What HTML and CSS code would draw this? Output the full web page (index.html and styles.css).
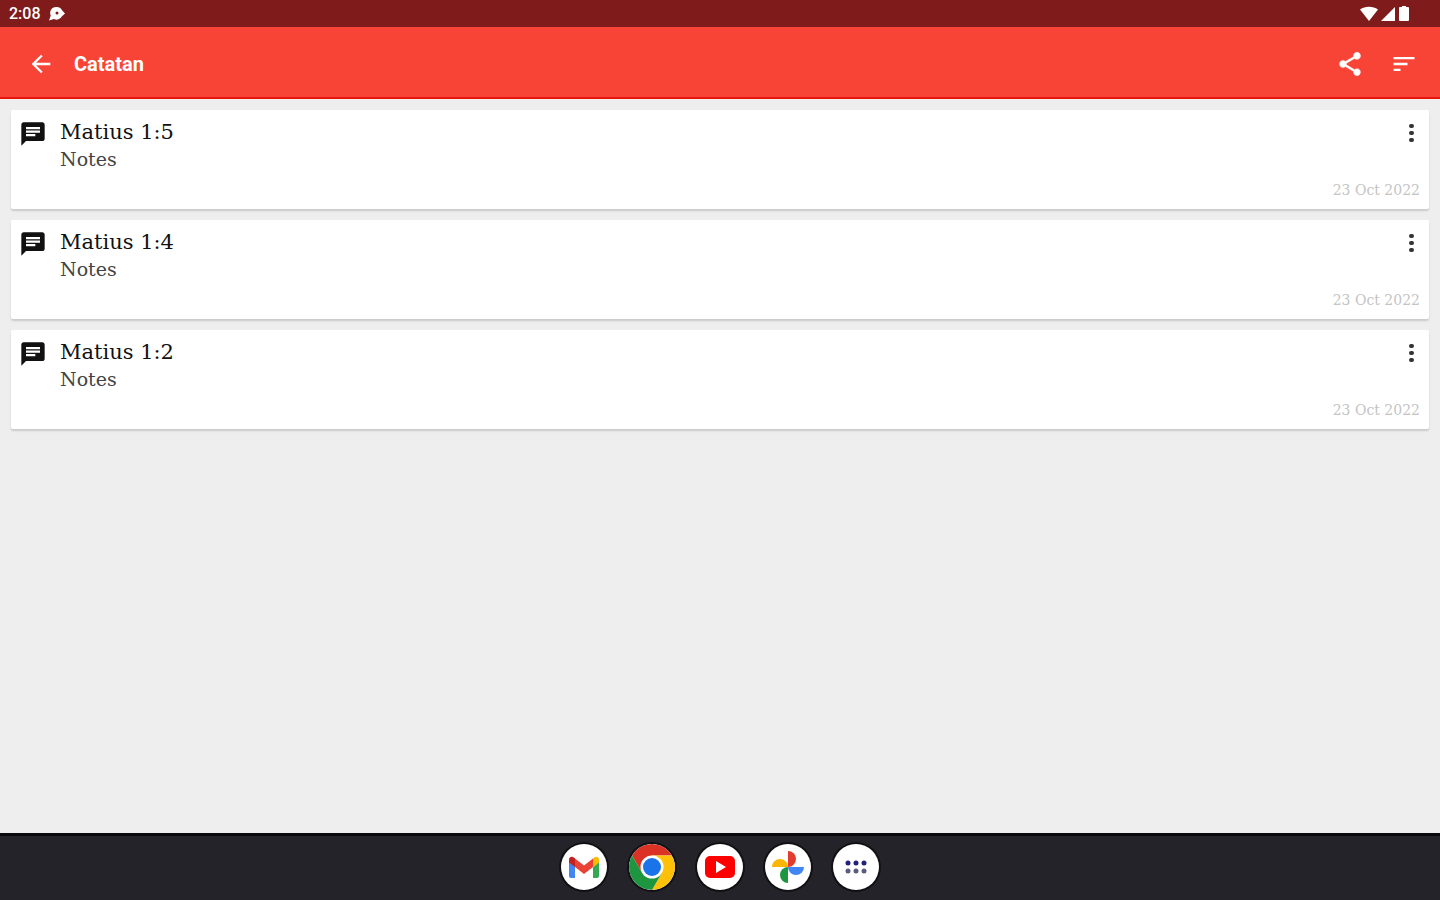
FILE: index.html
```html
<!DOCTYPE html>
<html lang="id">
<head>
  <meta charset="UTF-8">
  <meta name="viewport" content="width=device-width, initial-scale=1.0">
  <title>Catatan</title>
  <link rel="stylesheet" href="styles.css">
</head>
<body>
  <div class="status-bar">
    <span class="time">2:08</span>
    <svg class="notif" width="16" height="16" viewBox="0 0 16 16">
      <path fill="#fff" d="M7.500 1a6 6 0 0 1 5.500 3.200L16 7.500l-3 2.800A6 6 0 0 1 5 13L0 14.500 1.700 9.500A6 6 0 0 1 7.500 1z"/>
      <circle cx="8" cy="7" r="1.500" fill="#7f1b1b"/>
    </svg>
    <div class="status-icons">
      <svg width="18" height="16" viewBox="0 0 18 16"><path fill="#fff" d="M0 3.500C5-.2 13-.2 18 3.500L9 15z"/></svg>
      <svg width="16" height="16" viewBox="0 0 16 16"><path fill="#fff" d="M15 1v14H1z"/></svg>
      <svg width="12" height="16" viewBox="0 0 12 16"><path fill="#fff" d="M4 0h4v1h2q1 0 1 1v12q0 1-1 1H2q-1 0-1-1V2q0-1 1-1h2z"/></svg>
    </div>
  </div>

  <header class="toolbar">
    <button class="icon-btn" aria-label="Kembali">
      <svg width="28" height="28" viewBox="0 0 24 24"><path fill="#fff" d="M20 11H7.830l5.590-5.590L12 4l-8 8 8 8 1.410-1.410L7.830 13H20z"/></svg>
    </button>
    <h1>Catatan</h1>
    <div class="actions">
      <button class="icon-btn" aria-label="Bagikan">
        <svg width="28" height="28" viewBox="0 0 24 24"><path fill="#fff" stroke="#fff" stroke-width=".4" d="M18 16.080c-.76 0-1.440.3-1.960.77L8.910 12.700c.05-.23.09-.46.09-.7s-.04-.47-.09-.7l7.050-4.110c.54.5 1.250.81 2.040.81 1.660 0 3-1.340 3-3s-1.340-3-3-3-3 1.340-3 3c0 .24.04.47.09.7L8.040 9.810C7.500 9.310 6.790 9 6 9c-1.660 0-3 1.340-3 3s1.340 3 3 3c.79 0 1.500-.31 2.040-.81l7.120 4.160c-.05.21-.08.43-.08.65 0 1.610 1.310 2.920 2.920 2.920s2.920-1.310 2.920-2.920-1.310-2.920-2.920-2.920z"/></svg>
      </button>
      <button class="icon-btn" aria-label="Urutkan">
        <svg width="28" height="28" viewBox="0 0 24 24"><path fill="#fff" d="M3 18h6v-2H3v2zM3 6v2h18V6H3zm0 7h12v-2H3v2z"/></svg>
      </button>
    </div>
  </header>

  <!-- Daftar catatan -->
  <main class="notes">
    <article class="card">
      <svg class="note-icon" viewBox="0 0 24 24"><path d="M20 2H4c-1.100 0-2 .9-2 2v18l4-4h14c1.100 0 2-.9 2-2V4c0-1.100-.9-2-2-2zM6 9h12v2H6V9zm8 5H6v-2h8v2zm4-6H6V6h12v2z"/></svg>
      <div class="note-text">
        <h2>Matius 1:5</h2>
        <p>Notes</p>
        <time datetime="2022-10-23">23 Oct 2022</time>
      </div>
      <button class="more" aria-label="Menu"><span></span><span></span><span></span></button>
    </article>
    <article class="card">
      <svg class="note-icon" viewBox="0 0 24 24"><path d="M20 2H4c-1.100 0-2 .9-2 2v18l4-4h14c1.100 0 2-.9 2-2V4c0-1.100-.9-2-2-2zM6 9h12v2H6V9zm8 5H6v-2h8v2zm4-6H6V6h12v2z"/></svg>
      <div class="note-text">
        <h2>Matius 1:4</h2>
        <p>Notes</p>
        <time datetime="2022-10-23">23 Oct 2022</time>
      </div>
      <button class="more" aria-label="Menu"><span></span><span></span><span></span></button>
    </article>
    <article class="card">
      <svg class="note-icon" viewBox="0 0 24 24"><path d="M20 2H4c-1.100 0-2 .9-2 2v18l4-4h14c1.100 0 2-.9 2-2V4c0-1.100-.9-2-2-2zM6 9h12v2H6V9zm8 5H6v-2h8v2zm4-6H6V6h12v2z"/></svg>
      <div class="note-text">
        <h2>Matius 1:2</h2>
        <p>Notes</p>
        <time datetime="2022-10-23">23 Oct 2022</time>
      </div>
      <button class="more" aria-label="Menu"><span></span><span></span><span></span></button>
    </article>
  </main>

  <nav class="dock">
    <button class="app" aria-label="Gmail">
      <svg viewBox="0 0 46 46">
        <path fill="#4285f4" d="M8 15l6 4v15H10q-2 0-2-2z"/>
        <path fill="#34a853" d="M38 15l-6 4v15h4q2 0 2-2z"/>
        <path fill="#fbbc04" d="M32 14.500c3-3 6-1.500 6 1.500v2.500l-6 5z"/>
        <path fill="#ea4335" d="M14 14.500l9 7 9-7v8.500l-9 7-9-7z"/>
        <path fill="#c5221f" d="M8 16c0-3 3-4.500 6-1.500V23l-6-4.500z"/>
      </svg>
    </button>
    <button class="app" aria-label="Chrome">
      <svg viewBox="0 0 46 46">
        <path fill="#db3226" d="M3.080 11.500A23 23 0 0 1 42.920 11.500H23L13.040 28.750z"/>
        <path fill="#ffc107" d="M42.920 11.500A23 23 0 0 1 23 46L32.960 28.750 23 11.500z"/>
        <path fill="#1e9640" d="M23 46A23 23 0 0 1 3.080 11.500L13.040 28.750 32.960 28.750z"/>
        <circle cx="23" cy="23" r="11.500" fill="#fff"/>
        <circle cx="23" cy="23" r="9" fill="#1a73e8"/>
      </svg>
    </button>
    <button class="app" aria-label="YouTube">
      <svg viewBox="0 0 46 46">
        <rect x="8" y="12" width="30" height="22" rx="5" fill="#f00"/>
        <path fill="#fff" d="M19 17l10 6-10 6z"/>
      </svg>
    </button>
    <button class="app" aria-label="Foto">
      <svg viewBox="0 0 46 46">
        <path fill="#e33b2e" d="M23 7a8 8 0 0 1 0 16z"/>
        <path fill="#4285f4" d="M39 23a8 8 0 0 1-16 0z"/>
        <path fill="#1e9640" d="M23 39a8 8 0 0 1 0-16z"/>
        <path fill="#fbb604" d="M7 23a8 8 0 0 1 16 0z"/>
      </svg>
    </button>
    <button class="app" aria-label="Semua aplikasi">
      <svg viewBox="0 0 46 46">
        <g fill="#23237d">
          <circle cx="15" cy="19" r="2.500"/><circle cx="23" cy="19" r="2.500"/><circle cx="31" cy="19" r="2.500"/>
        </g>
        <g fill="#5a5d7c">
          <circle cx="15" cy="27" r="2.500"/><circle cx="23" cy="27" r="2.500"/><circle cx="31" cy="27" r="2.500"/>
        </g>
      </svg>
    </button>
  </nav>
</body>
</html>
```
FILE: styles.css
```css
* {
  box-sizing: border-box;
}

body {
  margin: 0;
  min-height: 100vh;
  display: flex;
  flex-direction: column;
  background-color: #eee;
  font-family: Roboto, sans-serif;
}

h1, h2, p {
  margin: 0;
}

button {
  padding: 0;
  border: none;
  background: none;
  cursor: pointer;
}

svg {
  display: block;
}

.status-bar {
  display: flex;
  align-items: center;
  gap: 8px;
  height: 27px;
  padding: 0 30px 0 9px;
  background-color: #7f1b1b;
  color: #fff;
}

.time {
  font-size: 16px;
  font-weight: 500;
}

.status-icons {
  display: flex;
  gap: 2px;
  margin-left: auto;
}

.toolbar {
  display: flex;
  align-items: center;
  height: 72px;
  padding: 3px 22px 0 27px;
  background-color: #f84437;
  border-bottom: 2px solid #e81408;
}

.toolbar h1 {
  margin-left: 19px;
  color: #fff;
  font-size: 20px;
  font-weight: 700;
}

.actions {
  display: flex;
  gap: 26px;
  margin-left: auto;
}

.notes {
  flex: 1;
  display: flex;
  flex-direction: column;
  gap: 11px;
  padding: 11px;
}

.card {
  display: flex;
  align-items: flex-start;
  padding: 9px;
  background-color: #fff;
  border-radius: 2px;
  box-shadow: 0 2px 2px rgba(0, 0, 0, 0.15);
  font-family: "DejaVu Serif", serif;
}

.note-icon {
  width: 28px;
  height: 28px;
  margin: 1px 13px 0 -1px;
  fill: #111;
}

.note-text {
  flex: 1;
  display: flex;
  flex-direction: column;
}

.note-text h2 {
  font-size: 21px;
  font-weight: 400;
  line-height: 27px;
  color: #111;
}

.note-text p {
  font-size: 19px;
  line-height: 27px;
  color: #444;
}

.note-text time {
  align-self: flex-end;
  margin-top: 7px;
  font-size: 14px;
  line-height: 20px;
  color: #c4c4c4;
}

.more {
  display: flex;
  flex-direction: column;
  align-items: center;
  gap: 3px;
  width: 18px;
  margin: 5px 0 0 -18px;
}

.more span {
  width: 5px;
  height: 4px;
  border-radius: 2px;
  background-color: #333;
}

/* Barra inferior con las aplicaciones */
.dock {
  display: flex;
  justify-content: center;
  align-items: center;
  gap: 22px;
  height: 67px;
  padding-bottom: 3px;
  background-color: #242329;
  border-top: 3px solid #09090b;
}

.app {
  width: 46px;
  height: 46px;
  border-radius: 50%;
  background-color: #fff;
  overflow: hidden;
  box-shadow: 0 0 0 2px #111114;
}
```
